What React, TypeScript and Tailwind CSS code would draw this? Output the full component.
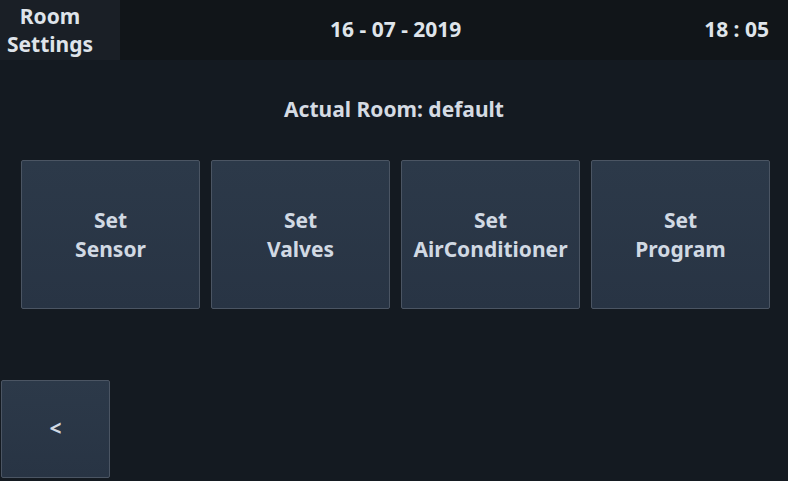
import React from "react";

const font = { fontFamily: '"Noto Sans", "Open Sans", sans-serif' };

function Btn({ a, b }: { a: string; b: string }) {
  return (
    <div className="w-[179px] h-[149px] rounded-[2px] border border-[#4b5563] bg-gradient-to-b from-[#2c3949] to-[#283444] flex flex-col items-center justify-center text-[21px] leading-[29px] font-bold text-[#d1d9e3]">
      <span>{a}</span>
      <span>{b}</span>
    </div>
  );
}

export default function App() {
  return (
    <div style={font} className="w-[788px] h-[481px] bg-[#141a21] flex flex-col overflow-hidden">
      <div className="h-[60px] flex bg-[#111519] text-[#dfe4ea] font-bold text-[21px]">
        <div className="w-[120px] bg-[#1a1f26] flex">
          <div className="w-[100px] flex flex-col items-center justify-center leading-[28px]">
            <span>Room</span>
            <span>Settings</span>
          </div>
        </div>
        <div className="flex-1 flex items-center justify-between pl-[210px] pr-[19px]">
          <span>16 - 07 - 2019</span>
          <span>18 : 05</span>
        </div>
      </div>
      <div className="h-[100px] flex items-center justify-center text-[21px] font-bold text-[#d5dbe3]">
        Actual Room: default
      </div>
      <div className="flex gap-[11px] pl-[21px]">
        <Btn a="Set" b="Sensor" />
        <Btn a="Set" b="Valves" />
        <Btn a="Set" b="AirConditioner" />
        <Btn a="Set" b="Program" />
      </div>
      <div className="pt-[71px] pl-[1px]">
        <div className="w-[109px] h-[98px] rounded-[2px] border border-[#4b5563] bg-gradient-to-b from-[#2c3949] to-[#283444] flex items-center justify-center text-[21px] font-bold text-[#d1d9e3]">
          &lt;
        </div>
      </div>
    </div>
  );
}
